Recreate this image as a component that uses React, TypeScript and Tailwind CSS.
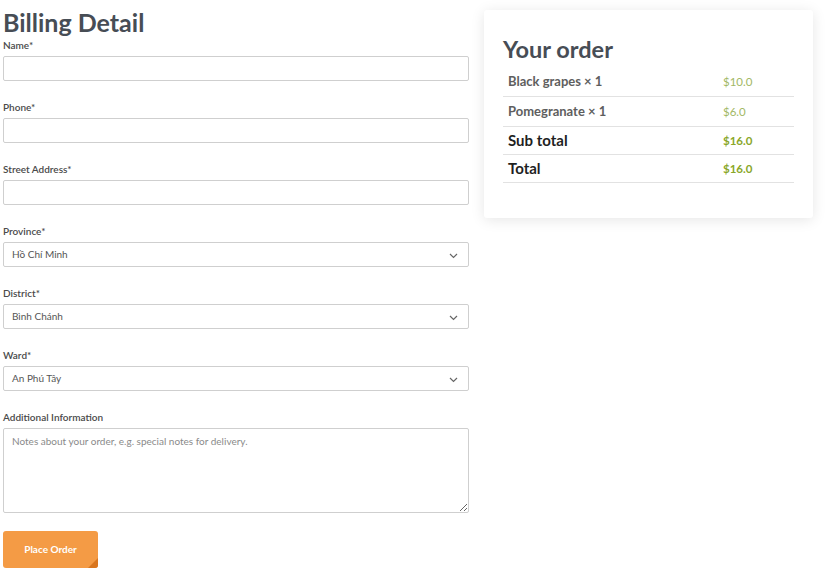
import React from "react";

const Chevron = () => (
  <svg width="9" height="6" viewBox="0 0 9 6" className="absolute right-[10px] top-[10px]">
    <path d="M1 1l3.5 3.5L8 1" fill="none" stroke="#666" strokeWidth="1.2" />
  </svg>
);

const Label = ({ children }: { children: React.ReactNode }) => (
  <div className="h-[16px] text-[10px] leading-[10px] font-semibold text-[#4a4a4a]">{children}</div>
);

const TextField = ({ label }: { label: string }) => (
  <div className="mb-[21px]">
    <Label>{label}</Label>
    <input className="block w-full h-[25px] border border-[#cfcfcf] rounded-[2px] bg-white px-2 outline-none" />
  </div>
);

const SelectField = ({ label, value }: { label: string; value: string }) => (
  <div className="mb-[21px]">
    <Label>{label}</Label>
    <div className="relative w-full h-[25px] border border-[#cfcfcf] rounded-[2px] bg-white pl-[8px] text-[10px] leading-[23px] text-[#555]">
      {value}
      <Chevron />
    </div>
  </div>
);

export default function App() {
  return (
    <div
      className="w-[825px] h-[580px] bg-white flex pl-[3px] overflow-hidden"
      style={{ fontFamily: "Lato, 'Noto Sans', sans-serif" }}
    >
      <div className="w-[466px] flex flex-col">
        <h1 className="text-[25px] leading-[30px] font-bold text-[#474d55] mt-[7px] mb-[3px]">Billing Detail</h1>
        <TextField label="Name*" />
        <TextField label="Phone*" />
        <TextField label="Street Address*" />
        <SelectField label="Province*" value="Hồ Chí Minh" />
        <SelectField label="District*" value="Bình Chánh" />
        <SelectField label="Ward*" value="An Phú Tây" />
        <div>
          <Label>Additional Information</Label>
          <textarea
            className="block w-full h-[85px] border border-[#cfcfcf] rounded-[2px] bg-white px-[8px] py-[5px] text-[10px] text-[#555] placeholder:text-[#8a8a8a] outline-none"
            placeholder="Notes about your order, e.g. special notes for delivery."
          />
        </div>
        <button className="relative mt-[18px] w-[95px] h-[37px] bg-[#f49b45] rounded-[3px] text-white text-[10px] font-bold overflow-hidden">
          Place Order
          <span className="absolute right-0 bottom-0 w-0 h-0 border-l-[10px] border-l-transparent border-b-[10px] border-b-[#d9761f]" />
        </button>
      </div>
      <div className="ml-[15px] mt-[10px] w-[329px] h-[208px] bg-white rounded-[3px] shadow-[0_2px_14px_rgba(0,0,0,0.1)] px-[19px] pt-[25px]">
        <h2 className="text-[23.5px] leading-[28px] font-bold text-[#474d55] mb-[4px]">Your order</h2>
        <div className="flex flex-col">
          <div className="flex items-center h-[30px] border-b border-[#e2e2e2] pl-[5px]">
            <span className="flex-1 text-[13px] font-bold text-[#5e5e5e]">Black grapes × 1</span>
            <span className="w-[71px] text-[11.5px] text-[#a2b865]">$10.0</span>
          </div>
          <div className="flex items-center h-[30px] border-b border-[#e2e2e2] pl-[5px]">
            <span className="flex-1 text-[13px] font-bold text-[#5e5e5e]">Pomegranate × 1</span>
            <span className="w-[71px] text-[11.5px] text-[#a2b865]">$6.0</span>
          </div>
          <div className="flex items-center h-[28px] border-b border-[#e2e2e2] pl-[5px]">
            <span className="flex-1 text-[15px] font-bold text-[#1f1f1f]">Sub total</span>
            <span className="w-[71px] text-[11.5px] font-bold text-[#8aa72a]">$16.0</span>
          </div>
          <div className="flex items-center h-[28px] border-b border-[#e2e2e2] pl-[5px]">
            <span className="flex-1 text-[15px] font-bold text-[#1f1f1f]">Total</span>
            <span className="w-[71px] text-[11.5px] font-bold text-[#8aa72a]">$16.0</span>
          </div>
        </div>
      </div>
    </div>
  );
}
